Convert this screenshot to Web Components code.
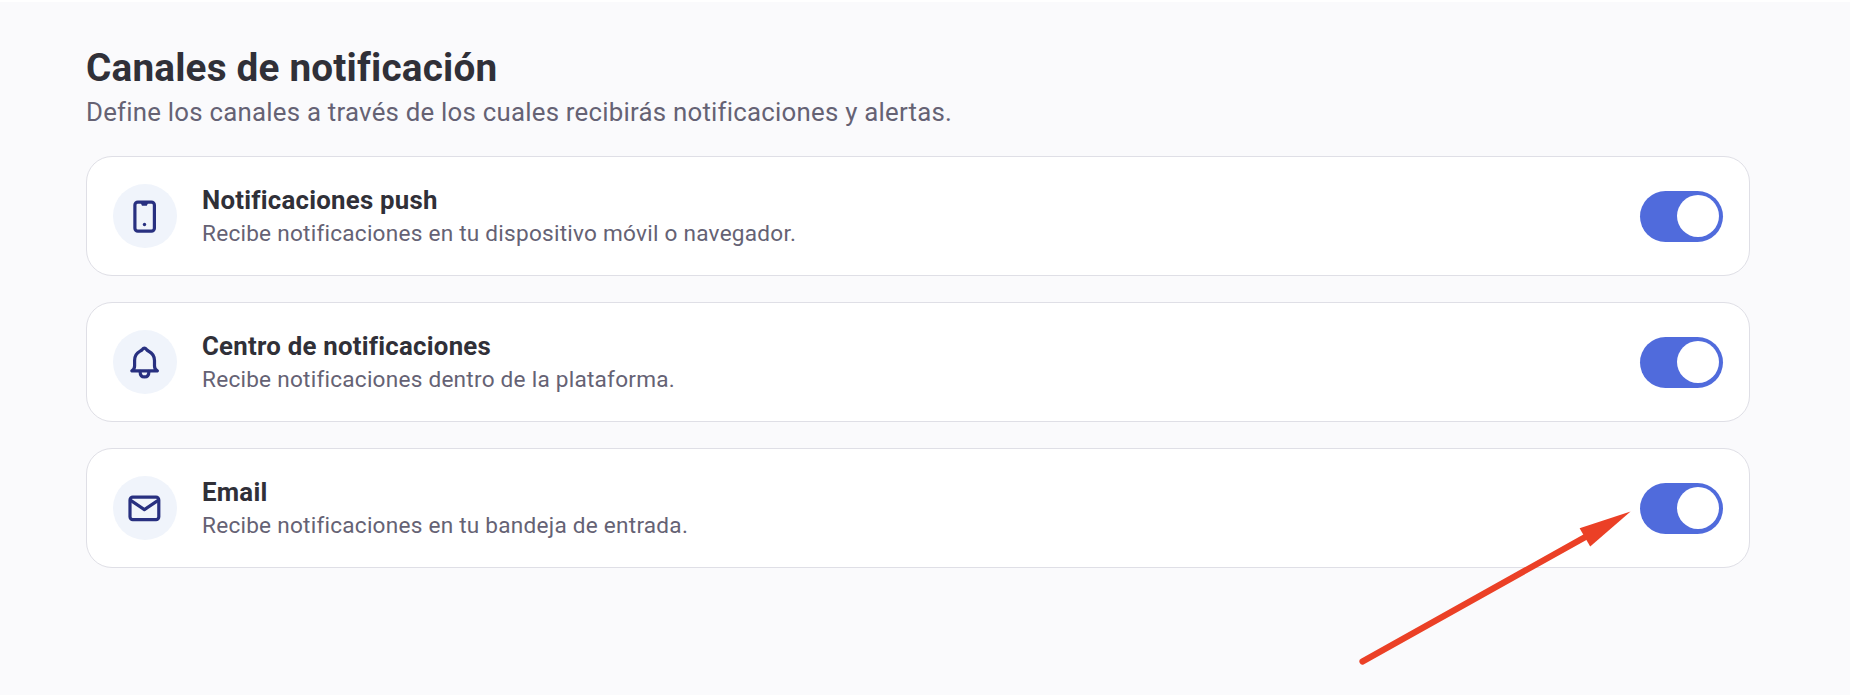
<!DOCTYPE html>
<html lang="es">
<head>
<meta charset="utf-8">
<title>Canales de notificación</title>
<style>
    body{
        margin:0;
        height:696px;
        overflow:hidden;
        background:#fafafc;
        border-top:2px solid #fff;
        border-bottom:1px solid #fff;
        box-sizing:border-box;
        font-family:Roboto, "Liberation Sans", sans-serif;
        color:#303038;
    }
</style>
</head>
<body>

<notif-canales>
    <span slot="titulo">Canales de notificación</span>
    <span slot="descripcion">Define los canales a través de los cuales recibirás notificaciones y alertas.</span>

    <notif-canal icono="movil">
        <span slot="titulo">Notificaciones push</span>
        <span slot="descripcion">Recibe notificaciones en tu dispositivo móvil o navegador.</span>
    </notif-canal>
    <notif-canal icono="campana">
        <span slot="titulo">Centro de notificaciones</span>
        <span slot="descripcion">Recibe notificaciones dentro de la plataforma.</span>
    </notif-canal>
    <notif-canal icono="sobre">
        <span slot="titulo">Email</span>
        <span slot="descripcion">Recibe notificaciones en tu bandeja de entrada.</span>
    </notif-canal>
</notif-canales>
<notif-flecha></notif-flecha>

<script>
const iconos = {
    movil: `
        <rect x="10.9" y="7.1" width="19.5" height="29.1" rx="3"/>
        <path d="M16.2 7h8.4l-1.8 3.8h-4.8z" fill="currentColor" stroke="none"/>
        <circle cx="20.5" cy="29.5" r="1.7" fill="currentColor" stroke="none"/>`,
    campana: `
        <path d="M7.8 29.8h25.6M7.8 29.8C9.9 28.6 10.6 27 10.6 25v-5.4c0-4.2 2-7.6 5.5-9.4 1.2-.6 1.8-1.2 2.4-2 1-1.4 2.8-1.4 3.8 0 .6.8 1.2 1.4 2.4 2 3.6 1.8 5.8 5.2 5.8 9.4V25c0 2 .6 3.6 2.9 4.8"/>
        <path d="M16.1 30.4c0 3.3 1.6 5.5 4.4 5.5s4.4-2.2 4.4-5.5"/>`,
    sobre: `
        <rect x="6" y="10.1" width="28.8" height="22.5" rx="2.8"/>
        <path d="M6.7 13.4l13.7 9.2 13.7-9.2"/>`
};

/* interruptor */
const tpl_interruptor = document.createElement('template');
tpl_interruptor.innerHTML = `
    <style>
        :host{
            display:block;
            flex:none;
        }
        button{
            display:flex;
            justify-content:flex-start;
            align-items:center;
            box-sizing:border-box;
            width:83px;
            height:51px;
            padding:0 4px;
            margin:0;
            border:0;
            border-radius:26px;
            background:#c8c8d0;
            cursor:pointer;
        }
        :host([activo]) button{
            justify-content:flex-end;
            background:#506bdc;
        }
        i{
            width:42px;
            height:42px;
            border-radius:50%;
            background:#fff;
        }
    </style>
    <button type="button" role="switch"><i></i></button>
`;

class NotifInterruptor extends HTMLElement {

    constructor() {
        super();
        this.attachShadow({ mode: 'open' });
        this.shadowRoot.appendChild(tpl_interruptor.content.cloneNode(true));
    }

    connectedCallback() {
        let boton = this.shadowRoot.querySelector('button');
        boton.setAttribute('aria-checked', this.hasAttribute('activo'));
        boton.onclick = () => {
            this.toggleAttribute('activo');
            boton.setAttribute('aria-checked', this.hasAttribute('activo'));
        };
    }
}

/* tarjeta de un canal */
const tpl_canal = document.createElement('template');
tpl_canal.innerHTML = `
    <style>
        :host{
            display:flex;
            align-items:center;
            box-sizing:border-box;
            height:120px;
            padding:0 26px;
            border:1px solid #dfdfe6;
            border-radius:26px;
            background:#fff;
        }
        .icono{
            flex:none;
            width:64px;
            height:64px;
            margin-right:25px;
            border-radius:50%;
            background:#f0f4fb;
            color:#283080;
            display:flex;
            align-items:center;
            justify-content:center;
        }
        svg{
            width:43px;
            height:43px;
            fill:none;
            stroke:currentColor;
            stroke-width:3.2;
            stroke-linejoin:round;
            stroke-linecap:round;
        }
        .texto{
            flex:1;
        }
        .titulo{
            font-size:25.8px;
            line-height:34px;
            font-weight:700;
            letter-spacing:.24px;
        }
        .descripcion{
            padding-top:1px;
            margin-bottom:-1px;
            font-size:22.6px;
            line-height:32px;
            letter-spacing:.24px;
            color:#656274;
        }
    </style>
    <div class="icono"><svg viewBox="0 0 43 43"></svg></div>
    <div class="texto">
        <div class="titulo"><slot name="titulo"></slot></div>
        <div class="descripcion"><slot name="descripcion"></slot></div>
    </div>
    <notif-interruptor activo></notif-interruptor>
`;

class NotifCanal extends HTMLElement {

    constructor() {
        super();
        this.attachShadow({ mode: 'open' });
        this.shadowRoot.appendChild(tpl_canal.content.cloneNode(true));
    }

    connectedCallback() {
        this.shadowRoot.querySelector('svg').innerHTML = iconos[this.getAttribute('icono')] || '';
    }
}

/* sección completa */
const tpl_canales = document.createElement('template');
tpl_canales.innerHTML = `
    <style>
        :host{
            display:block;
            padding:40px 100px 0 86px;
        }
        h1{
            margin:0;
            font-size:38.7px;
            line-height:52px;
            font-weight:700;
            letter-spacing:.19px;
        }
        p{
            margin:0 0 26px;
            font-size:25.8px;
            line-height:36px;
            letter-spacing:.24px;
            color:#656274;
        }
        .lista{
            display:flex;
            flex-direction:column;
            gap:26px;
        }
    </style>
    <h1><slot name="titulo"></slot></h1>
    <p><slot name="descripcion"></slot></p>
    <div class="lista"><slot></slot></div>
`;

class NotifCanales extends HTMLElement {

    constructor() {
        super();
        this.attachShadow({ mode: 'open' });
        this.shadowRoot.appendChild(tpl_canales.content.cloneNode(true));
    }
}

/* flecha que señala el último interruptor */
const tpl_flecha = document.createElement('template');
tpl_flecha.innerHTML = `
    <style>
        :host{
            position:absolute;
            left:1350px;
            top:500px;
            pointer-events:none;
        }
        svg{
            display:block;
        }
    </style>
    <svg width="290" height="180" viewBox="0 0 290 180">
        <path d="M12.5 161.5L238 35.5" stroke="#eb4026" stroke-width="6.2" stroke-linecap="round"/>
        <path d="M280.6 11.5L229.6 28.2 240.2 46.4z" fill="#eb4026"/>
    </svg>
`;

class NotifFlecha extends HTMLElement {

    constructor() {
        super();
        this.attachShadow({ mode: 'open' });
        this.shadowRoot.appendChild(tpl_flecha.content.cloneNode(true));
    }
}

window.customElements.define('notif-interruptor', NotifInterruptor)
window.customElements.define('notif-canal', NotifCanal)
window.customElements.define('notif-canales', NotifCanales)
window.customElements.define('notif-flecha', NotifFlecha)
</script>
</body>
</html>
